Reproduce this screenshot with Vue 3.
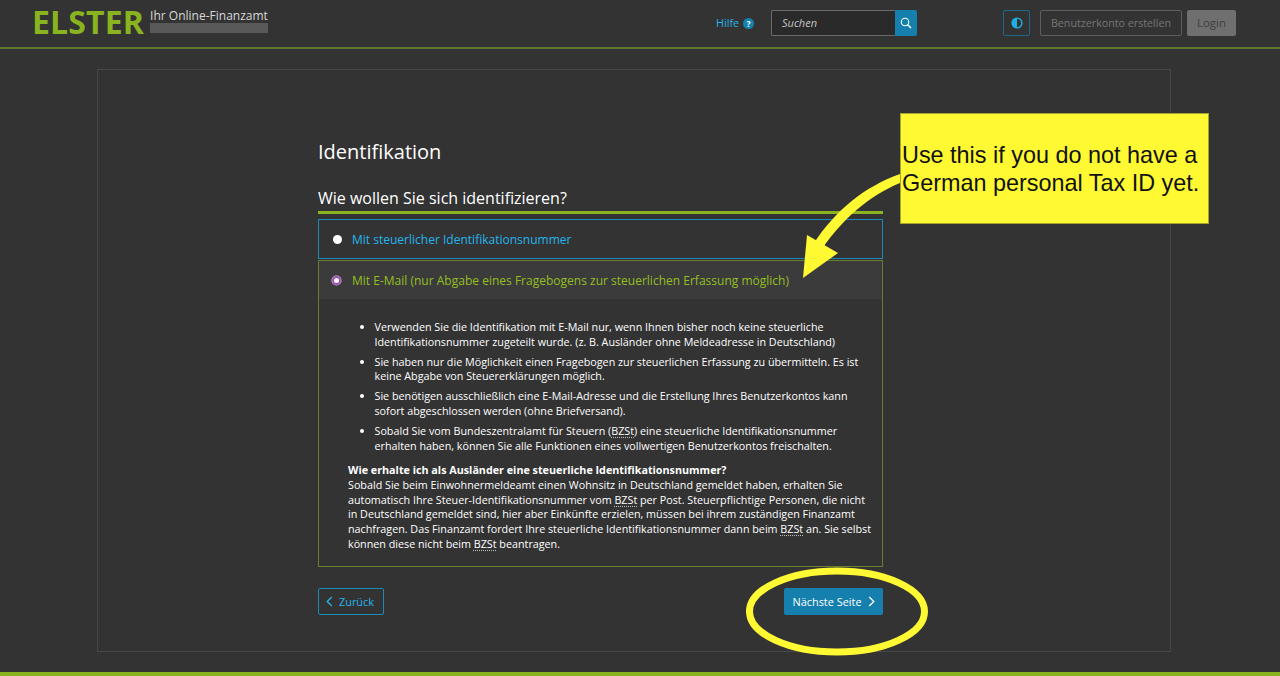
<script setup>
const bullets = [
  'Verwenden Sie die Identifikation mit E-Mail nur, wenn Ihnen bisher noch keine steuerliche Identifikationsnummer zugeteilt wurde. (z. B. Ausländer ohne Meldeadresse in Deutschland)',
  'Sie haben nur die Möglichkeit einen Fragebogen zur steuerlichen Erfassung zu übermitteln. Es ist keine Abgabe von Steuererklärungen möglich.',
  'Sie benötigen ausschließlich eine E-Mail-Adresse und die Erstellung Ihres Benutzerkontos kann sofort abgeschlossen werden (ohne Briefversand).',
]
</script>

<template>
  <div class="page">
    <header class="top">
      <div class="brand">
        <span class="logo">ELSTER</span>
        <div class="tag">
          <span class="tagtext">Ihr Online-Finanzamt</span>
          <span class="tagbar"></span>
        </div>
      </div>
      <div class="tools">
        <a class="help">Hilfe<span class="q">?</span></a>
        <div class="search">
          <span class="input">Suchen</span>
          <span class="sbtn">
            <svg width="12" height="12" viewBox="0 0 12 12" fill="none" stroke="#fff" stroke-width="1.1"><circle cx="5" cy="5" r="3.7"/><path d="M7.7 7.7L11 11" stroke-width="1.5"/></svg>
          </span>
        </div>
        <span class="contrast">
          <svg width="12" height="12" viewBox="0 0 12 12"><circle cx="6" cy="6" r="4.9" fill="none" stroke="#1fb0e6" stroke-width="1.4"/><path d="M6 1a5 5 0 0 0 0 10z" fill="#1fb0e6"/></svg>
        </span>
        <span class="ghost">Benutzerkonto erstellen</span>
        <span class="login">Login</span>
      </div>
    </header>

    <main class="main">
      <section class="card">
        <div class="col">
          <h1>Identifikation</h1>
          <h2>Wie wollen Sie sich identifizieren?</h2>
          <div class="opt blue">
            <span class="radio"></span>
            <span>Mit steuerlicher Identifikationsnummer</span>
          </div>
          <div class="panel">
            <div class="opt green">
              <span class="radio on"></span>
              <span>Mit E-Mail (nur Abgabe eines Fragebogens zur steuerlichen Erfassung möglich)</span>
            </div>
            <div class="body">
              <ul>
                <li v-for="b in bullets" :key="b">{{ b }}</li>
                <li>Sobald Sie vom Bundeszentralamt für Steuern (<abbr>BZSt</abbr>) eine steuerliche Identifikationsnummer erhalten haben, können Sie alle Funktionen eines vollwertigen Benutzerkontos freischalten.</li>
              </ul>
              <p><strong>Wie erhalte ich als Ausländer eine steuerliche Identifikationsnummer?</strong><br>Sobald Sie beim Einwohnermeldeamt einen Wohnsitz in Deutschland gemeldet haben, erhalten Sie automatisch Ihre Steuer-Identifikationsnummer vom <abbr>BZSt</abbr> per Post. Steuerpflichtige Personen, die nicht in Deutschland gemeldet sind, hier aber Einkünfte erzielen, müssen bei ihrem zuständigen Finanzamt nachfragen. Das Finanzamt fordert Ihre steuerliche Identifikationsnummer dann beim <abbr>BZSt</abbr> an. Sie selbst können diese nicht beim <abbr>BZSt</abbr> beantragen.</p>
            </div>
          </div>
          <div class="nav">
            <span class="back">
              <svg width="7" height="11" viewBox="0 0 7 11" fill="none" stroke="#25b5ee" stroke-width="1.3"><path d="M5.8 1L1.2 5.5L5.8 10"/></svg>
              Zurück
            </span>
            <span class="next">
              Nächste Seite
              <svg width="7" height="11" viewBox="0 0 7 11" fill="none" stroke="#fff" stroke-width="1.3"><path d="M1.2 1L5.8 5.5L1.2 10"/></svg>
            </span>
          </div>
        </div>
      </section>
    </main>
    <footer class="foot"></footer>

    <div class="note">Use this if you do not have a German personal Tax ID yet.</div>
    <svg class="marks" width="1280" height="676" viewBox="0 0 1280 676" fill="none">
      <path d="M900 174C864 187 836 210 814 243L822 249C842 220 868 196 900 183Z" fill="#fff933"/>
      <path d="M803 278L838 253L807 235Z" fill="#fff933"/>
      <ellipse cx="837" cy="611.5" rx="87.5" ry="40.5" stroke="#fff933" stroke-width="7"/>
    </svg>
  </div>
</template>

<style>
html, body { margin: 0; background: #333; }
</style>

<style scoped>
.page {
  position: relative;
  width: 1280px;
  height: 676px;
  overflow: hidden;
  display: flex;
  flex-direction: column;
  background: #333;
  color: #fff;
  font-family: "Open Sans", "Noto Sans", sans-serif;
}
.top {
  height: 47px;
  flex: none;
  box-sizing: content-box;
  border-bottom: 2px solid #5f7a2a;
  display: flex;
  justify-content: space-between;
  padding: 0 44px 0 32px;
}
.brand { display: flex; gap: 6px; padding-top: 7px; height: 29px; }
.logo {
  font-size: 32px;
  line-height: 29px;
  font-weight: 700;
  color: #8ab41f;
  letter-spacing: 0.15px;
}
.tag { display: flex; flex-direction: column; width: 118px; padding-top: 1px; }
.tagtext { font-size: 12px; line-height: 15px; color: #d8d8d8; white-space: nowrap; }
.tagbar { height: 10px; background: #595959; }
.tools { display: flex; align-items: flex-start; padding-top: 10px; }
.help {
  display: flex;
  align-items: center;
  gap: 4px;
  color: #25b5ee;
  font-size: 10.8px;
  height: 24px;
  width: 55px;
  white-space: nowrap;
}
.q {
  width: 11px;
  height: 11px;
  line-height: 11px;
  border-radius: 50%;
  background: #1583b0;
  color: #fff;
  font-size: 8px;
  font-weight: 700;
  text-align: center;
  margin-top: 2px;
}
.search { display: flex; width: 146px; height: 26px; margin-right: 86px; }
.input {
  flex: 1;
  box-sizing: border-box;
  border: 1px solid #6a6a6a;
  border-right: 0;
  border-radius: 2px 0 0 2px;
  background: #2a2a2a;
  color: #c4c4c4;
  font-size: 11px;
  font-style: italic;
  line-height: 24px;
  padding-left: 10px;
}
.sbtn {
  flex: 0 0 22px;
  background: #1580ad;
  border-radius: 0 2px 2px 0;
  display: flex;
  align-items: center;
  justify-content: center;
}
.contrast {
  box-sizing: border-box;
  width: 27px;
  height: 26px;
  border: 1px solid #1a6a8c;
  border-radius: 2px;
  display: flex;
  align-items: center;
  justify-content: center;
  margin-right: 10px;
}
.ghost {
  box-sizing: border-box;
  width: 142px;
  height: 26px;
  border: 1px solid #5e5e5e;
  border-radius: 2px;
  color: #767676;
  font-size: 10.7px;
  line-height: 24px;
  text-align: center;
  margin-right: 5px;
  white-space: nowrap;
}
.login {
  width: 49px;
  height: 26px;
  border-radius: 2px;
  background: #6f6f6f;
  color: #404040;
  font-size: 11.5px;
  line-height: 26px;
  text-align: center;
}
.main { flex: 1; padding: 20px 109px 20px 97px; min-height: 0; }
.card {
  box-sizing: border-box;
  height: 583px;
  border: 1px solid #474747;
  padding: 68px 287px 0 220px;
}
h1 { margin: 0; font-size: 20px; font-weight: 400; line-height: 27px; }
h2 {
  margin: 21px 0 0;
  font-size: 16px;
  font-weight: 400;
  line-height: 24px;
  padding-bottom: 1px;
  border-bottom: 3px solid #8ab41f;
}
.opt {
  display: flex;
  align-items: center;
  gap: 11px;
  font-size: 12.02px;
  padding-left: 14px;
  height: 38px;
  box-sizing: border-box;
}
.opt.blue {
  margin-top: 5px;
  height: 40px;
  gap: 10px;
  border: 1px solid #1a8ab8;
  color: #25b5ee;
}
.opt.green { background: #3b3b3b; color: #93bf22; padding-left: 13px; }
.radio {
  width: 9px;
  height: 9px;
  border-radius: 50%;
  background: #fff;
  flex: none;
  box-sizing: border-box;
}
.radio.on { border: 2.5px solid #a04db4; background: #fff; box-shadow: 0 0 0 0.5px #e3c4e8; }
.panel {
  margin-top: 1px;
  box-sizing: border-box;
  height: 307px;
  border: 1px solid #66802f;
}
.body { padding: 21px 8px 0 29px; font-size: 10.76px; line-height: 14.67px; color: #fff; }
ul { margin: 0; padding: 0 13px 0 26.5px; }
li { margin-bottom: 5.3px; }
p { margin: 10px 0 0; }
strong { font-weight: 700; }
abbr { text-decoration: underline dotted #bbb; text-underline-offset: 2px; }
.nav { display: flex; justify-content: space-between; margin-top: 21px; }
.back, .next {
  box-sizing: border-box;
  height: 27px;
  border-radius: 2px;
  font-size: 10.9px;
  display: flex;
  align-items: center;
  gap: 5px;
  white-space: nowrap;
}
.back { width: 66px; border: 1px solid #1a8ab8; color: #25b5ee; padding-left: 7px; gap: 6px; }
.next { width: 99px; background: #1580ad; color: #fff; justify-content: center; gap: 6px; }
.foot { height: 4px; flex: none; background: #8ab41f; }
.note {
  position: absolute;
  left: 900px;
  top: 113px;
  box-sizing: border-box;
  width: 309px;
  height: 111px;
  padding: 27px 0 0 1px;
  background: #fff933;
  border: 1px solid #a3a32e;
  color: #111;
  font-family: "Liberation Sans", Arial, sans-serif;
  font-size: 23.4px;
  line-height: 28px;
  text-align: left;
}
.marks { position: absolute; left: 0; top: 0; pointer-events: none; }
</style>
